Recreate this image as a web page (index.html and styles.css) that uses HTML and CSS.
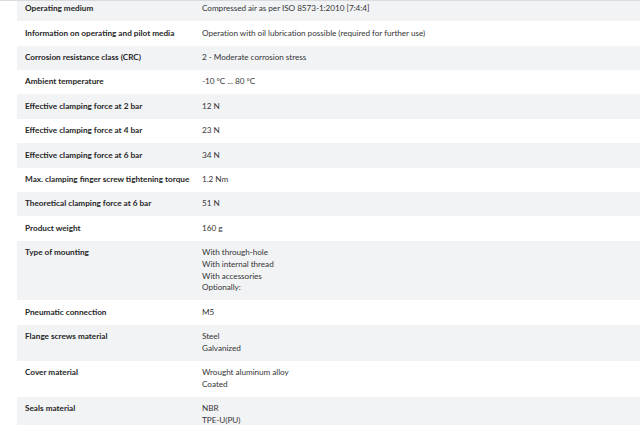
FILE: index.html
```html
<!DOCTYPE html>
<html lang="en">
<head>
<meta charset="utf-8">
<title>Technical data</title>
<link rel="stylesheet" href="styles.css">
</head>
<body>
<div class="frame">
  <div class="specs">
    <div class="row"><div class="key">Operating medium</div><div class="val">Compressed air as per ISO 8573-1:2010 [7:4:4]</div></div>
    <div class="row"><div class="key">Information on operating and pilot media</div><div class="val">Operation with oil lubrication possible (required for further use)</div></div>
    <div class="row"><div class="key">Corrosion resistance class (CRC)</div><div class="val">2 - Moderate corrosion stress</div></div>
    <div class="row"><div class="key">Ambient temperature</div><div class="val">-10 °C ... 80 °C</div></div>
    <div class="row"><div class="key">Effective clamping force at 2 bar</div><div class="val">12 N</div></div>
    <div class="row"><div class="key">Effective clamping force at 4 bar</div><div class="val">23 N</div></div>
    <div class="row"><div class="key">Effective clamping force at 6 bar</div><div class="val">34 N</div></div>
    <div class="row"><div class="key">Max. clamping finger screw tightening torque</div><div class="val">1.2 Nm</div></div>
    <div class="row"><div class="key">Theoretical clamping force at 6 bar</div><div class="val">51 N</div></div>
    <div class="row"><div class="key">Product weight</div><div class="val">160 g</div></div>
    <div class="row"><div class="key">Type of mounting</div><div class="val">With through-hole<br>With internal thread<br>With accessories<br>Optionally:</div></div>
    <div class="row"><div class="key">Pneumatic connection</div><div class="val">M5</div></div>
    <div class="row"><div class="key">Flange screws material</div><div class="val">Steel<br>Galvanized</div></div>
    <div class="row"><div class="key">Cover material</div><div class="val">Wrought aluminum alloy<br>Coated</div></div>
    <div class="row"><div class="key">Seals material</div><div class="val">NBR<br>TPE-U(PU)</div></div>
  </div>
</div>
</body>
</html>
```
FILE: styles.css
```css
html, body {
  margin: 0;
  padding: 0;
  background: #ffffff;
}
body {
  font-family: Lato, "Open Sans", "DejaVu Sans", sans-serif;
  font-size: 8.2px;
  line-height: 11.7px;
  color: #333;
}
.frame {
  border-top: 1px solid #d9dbde;
  overflow: hidden;
  height: 424px;
}
.specs {
  margin: -4.2px 0 0 17px;
}
.row {
  display: grid;
  grid-template-columns: 177px 1fr;
  padding: 6.4px 0 6.3px 8px;
}
.row:nth-child(odd) {
  background: #f2f3f5;
}
.key {
  font-weight: 700;
  color: #262626;
}
.val {
  color: #363636;
  letter-spacing: -0.05px;
}
```
